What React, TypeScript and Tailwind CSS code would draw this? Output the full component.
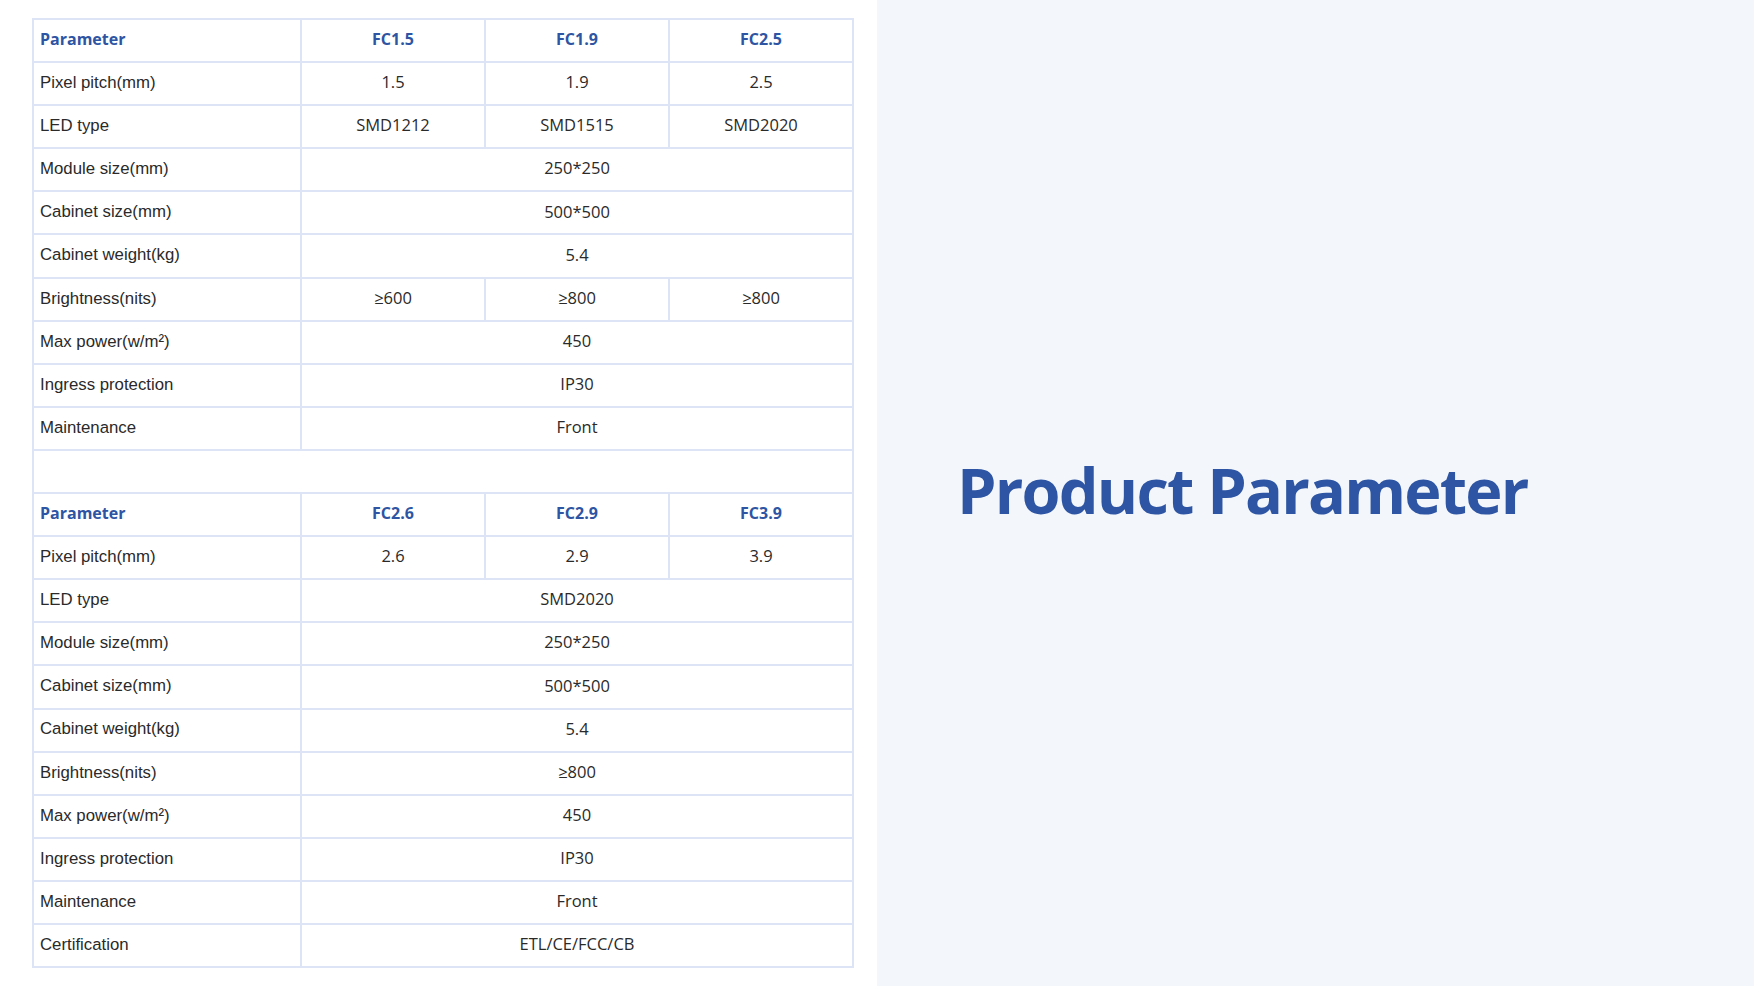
import React from 'react';

type Row = {
  label: string;
  values: string[]; // 1 value spans all three model columns
  header?: boolean;
};

const firstTable: Row[] = [
  { label: 'Parameter', values: ['FC1.5', 'FC1.9', 'FC2.5'], header: true },
  { label: 'Pixel pitch(mm)', values: ['1.5', '1.9', '2.5'] },
  { label: 'LED type', values: ['SMD1212', 'SMD1515', 'SMD2020'] },
  { label: 'Module size(mm)', values: ['250*250'] },
  { label: 'Cabinet size(mm)', values: ['500*500'] },
  { label: 'Cabinet weight(kg)', values: ['5.4'] },
  { label: 'Brightness(nits)', values: ['≥600', '≥800', '≥800'] },
  { label: 'Max power(w/m²)', values: ['450'] },
  { label: 'Ingress protection', values: ['IP30'] },
  { label: 'Maintenance', values: ['Front'] },
];

const secondTable: Row[] = [
  { label: 'Parameter', values: ['FC2.6', 'FC2.9', 'FC3.9'], header: true },
  { label: 'Pixel pitch(mm)', values: ['2.6', '2.9', '3.9'] },
  { label: 'LED type', values: ['SMD2020'] },
  { label: 'Module size(mm)', values: ['250*250'] },
  { label: 'Cabinet size(mm)', values: ['500*500'] },
  { label: 'Cabinet weight(kg)', values: ['5.4'] },
  { label: 'Brightness(nits)', values: ['≥800'] },
  { label: 'Max power(w/m²)', values: ['450'] },
  { label: 'Ingress protection', values: ['IP30'] },
  { label: 'Maintenance', values: ['Front'] },
  { label: 'Certification', values: ['ETL/CE/FCC/CB'] },
];

function SpecRow({ row }: { row: Row }) {
  const cell = 'border-2 border-[#dce4f5] p-0 align-middle';
  if (row.header) {
    return (
      <tr className="h-[43.1px]">
        <td className={`${cell} pl-[6px] pb-[3px] text-left font-['Open_Sans',sans-serif] text-[16px] font-bold text-[#2d55a3]`}>
          {row.label}
        </td>
        {row.values.map((v) => (
          <td key={v} className={`${cell} pb-[3px] text-center font-['Open_Sans',sans-serif] text-[16px] font-bold text-[#2d55a3]`}>
            {v}
          </td>
        ))}
      </tr>
    );
  }
  return (
    <tr className="h-[43.1px]">
      <td className={`${cell} pl-[6px] pb-[2px] text-left font-['Liberation_Sans',Arial,sans-serif] text-[16.8px] text-[#2a2a2a]`}>
        {row.label}
      </td>
      {row.values.length === 1 ? (
        <td colSpan={3} className={`${cell} pb-[2px] text-center font-['Open_Sans',sans-serif] text-[16.5px] text-[#2a2a2a]`}>
          {row.values[0]}
        </td>
      ) : (
        row.values.map((v, i) => (
          <td key={i} className={`${cell} pb-[2px] text-center font-['Open_Sans',sans-serif] text-[16.5px] text-[#2a2a2a]`}>
            {v}
          </td>
        ))
      )}
    </tr>
  );
}

export default function App() {
  return (
    <div className="flex h-[986px] w-full overflow-hidden">
      {/* Spec table panel */}
      <div className="w-[877px] shrink-0 bg-white pl-[32px] pt-[18px]">
        <table className="w-[821px] table-fixed border-collapse">
          <colgroup>
            <col className="w-[268px]" />
            <col className="w-[184px]" />
            <col className="w-[184px]" />
            <col className="w-[184px]" />
          </colgroup>
          <tbody>
            {firstTable.map((row, i) => (
              <SpecRow key={'a' + i} row={row} />
            ))}
            <tr className="h-[43.1px]">
              <td colSpan={4} className="border-2 border-[#dce4f5] p-0"></td>
            </tr>
            {secondTable.map((row, i) => (
              <SpecRow key={'b' + i} row={row} />
            ))}
          </tbody>
        </table>
      </div>

      {/* Title panel */}
      <div className="flex flex-1 items-center bg-[#f3f6fb] pb-[6px] pl-[80px]">
        <h1 className="font-['Open_Sans',sans-serif] text-[63px] font-bold tracking-[-1.8px] text-[#2d55a3]">
          Product Parameter
        </h1>
      </div>
    </div>
  );
}
